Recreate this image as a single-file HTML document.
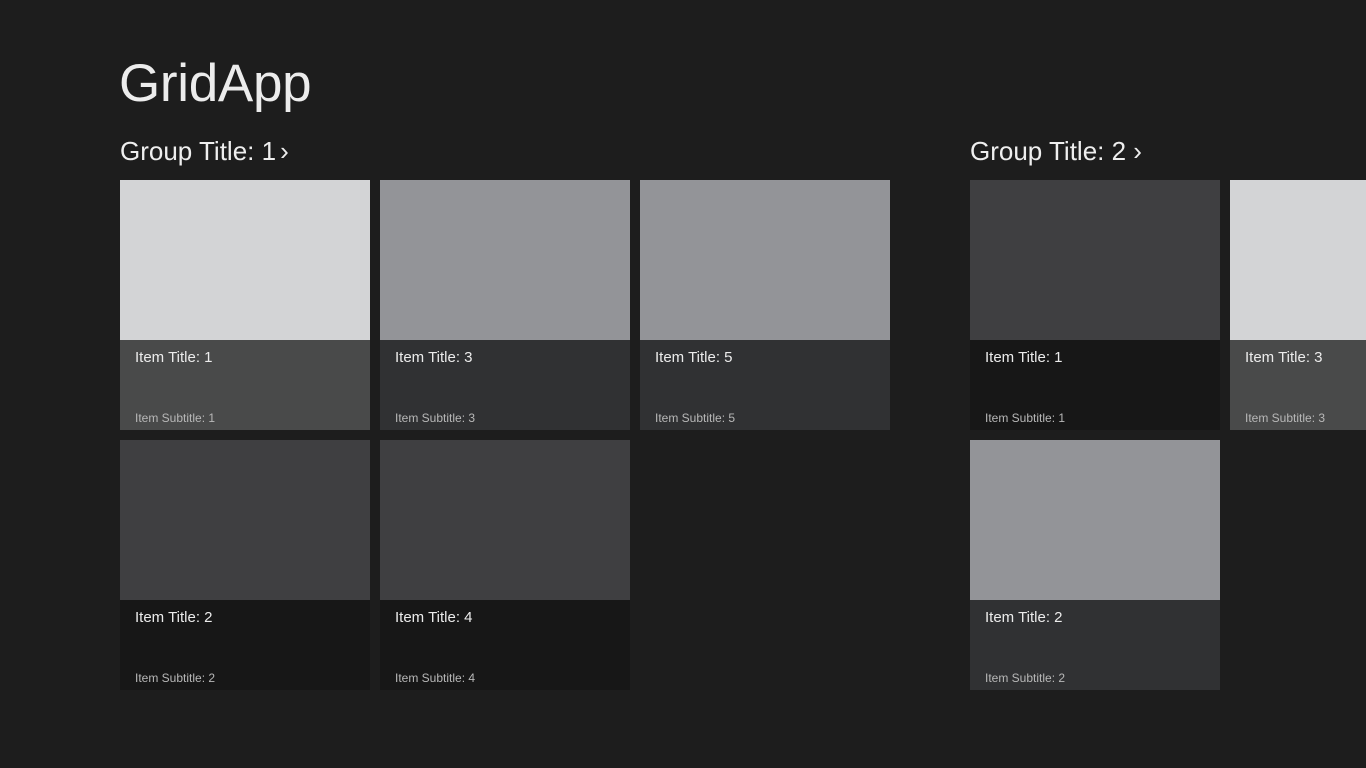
<!DOCTYPE html>
<html><head><meta charset="utf-8"><style>
body{margin:0;width:1366px;height:768px;background:#1d1d1d;overflow:hidden;position:relative;font-family:"Liberation Sans",sans-serif;color:#fff}
.t{position:absolute;white-space:nowrap;line-height:1}
.h1{left:119px;top:57px;font-size:53px;color:#ececec;letter-spacing:-0.3px}
.g{font-size:26px;top:138px;color:#eee}
.tile{position:absolute;width:250px;height:250px}
.img{height:160px}
.bar{height:90px;position:relative}
.it{position:absolute;left:15px;top:10px;font-size:15px;color:#ececec;line-height:1}
.st{position:absolute;left:15px;top:72px;font-size:12px;color:#b8b8b8;line-height:1}
</style></head><body>
<div class="t h1">GridApp</div>
<div class="t g" style="left:120px">Group Title: 1<span style="margin-left:4px">›</span></div>
<div class="t g" style="left:970px">Group Title: 2 ›</div>

<div class="tile" style="left:120px;top:180px"><div class="img" style="background:#d3d4d6"></div><div class="bar" style="background:#494a4a"><div class="it">Item Title: 1</div><div class="st">Item Subtitle: 1</div></div></div>
<div class="tile" style="left:380px;top:180px"><div class="img" style="background:#939498"></div><div class="bar" style="background:#303133"><div class="it">Item Title: 3</div><div class="st">Item Subtitle: 3</div></div></div>
<div class="tile" style="left:640px;top:180px"><div class="img" style="background:#939498"></div><div class="bar" style="background:#303133"><div class="it">Item Title: 5</div><div class="st">Item Subtitle: 5</div></div></div>
<div class="tile" style="left:120px;top:440px"><div class="img" style="background:#3f3f41"></div><div class="bar" style="background:#171717"><div class="it">Item Title: 2</div><div class="st">Item Subtitle: 2</div></div></div>
<div class="tile" style="left:380px;top:440px"><div class="img" style="background:#3f3f41"></div><div class="bar" style="background:#171717"><div class="it">Item Title: 4</div><div class="st">Item Subtitle: 4</div></div></div>

<div class="tile" style="left:970px;top:180px"><div class="img" style="background:#3f3f41"></div><div class="bar" style="background:#171717"><div class="it">Item Title: 1</div><div class="st">Item Subtitle: 1</div></div></div>
<div class="tile" style="left:1230px;top:180px"><div class="img" style="background:#d3d4d6"></div><div class="bar" style="background:#494a4a"><div class="it">Item Title: 3</div><div class="st">Item Subtitle: 3</div></div></div>
<div class="tile" style="left:970px;top:440px"><div class="img" style="background:#939498"></div><div class="bar" style="background:#303133"><div class="it">Item Title: 2</div><div class="st">Item Subtitle: 2</div></div></div>
</body></html>
